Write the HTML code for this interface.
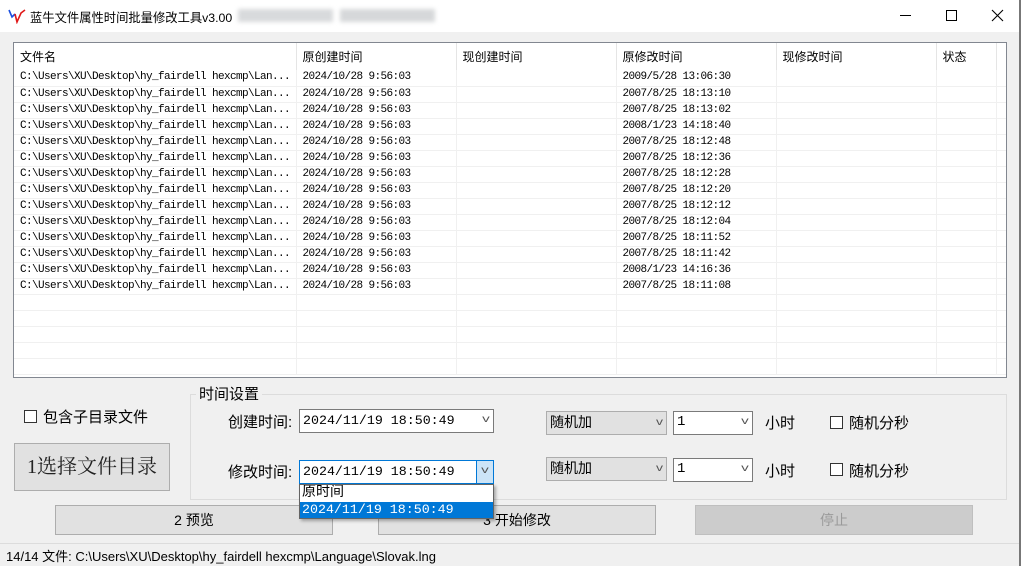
<!DOCTYPE html><html><head><meta charset="utf-8"><style>
*{margin:0;padding:0;box-sizing:border-box}
body{width:1021px;height:566px;background:#f0f0f0;position:relative;overflow:hidden;font-family:"Liberation Sans","Noto Sans CJK SC",sans-serif;color:#000}
.a{position:absolute}
#title{left:0;top:0;width:1021px;height:32px;background:#fff;border-right:1px solid #888}
#list{left:13px;top:42px;width:994px;height:336px;background:#fff;border:1px solid #828790;overflow:hidden}
table{border-collapse:collapse;table-layout:fixed;position:absolute;left:0;top:0;width:993px}
td{height:16px;border-bottom:1px solid #f0f0f0;border-right:1px solid #f0f0f0;font-family:"Liberation Mono",monospace;font-size:11px;letter-spacing:-0.6px;padding-left:6px;white-space:nowrap;overflow:hidden;line-height:15px}
th{height:27px;font-weight:normal;text-align:left;font-size:12px;padding-left:6px;border-right:1px solid #e5e5e5;font-family:"Liberation Sans","Noto Sans CJK SC",sans-serif;overflow:hidden;white-space:nowrap}
.cb{width:13px;height:13px;border:1px solid #333;background:#fff}
.combo{background:#fff;border:1px solid #7a7a7a;font-family:"Liberation Mono","Noto Sans CJK SC",monospace;font-size:13.3px;line-height:21px;padding-left:3px}
.gc{background:#e1e1e1;border:1px solid #adadad;font-size:14px;line-height:21px;padding-left:3px}
.arr{position:absolute;right:4px;top:0;font-size:10px;color:#555;transform:scaleX(1.4)}
.btn{background:#e1e1e1;border:1px solid #adadad;text-align:center;font-size:14px}
.t14{font-size:15px}
</style></head><body>
<div class="a" id="title">
<svg class="a" style="left:8px;top:8px" width="18" height="16"><path d="M1 2 L4 9 L7 6" stroke="#1a4fe0" stroke-width="1.6" fill="none"/><path d="M7 6 L9 14 L13 5 L17 2" stroke="#e01818" stroke-width="1.6" fill="none"/></svg>
<div class="a" style="left:30px;top:8px;font-size:12.3px;white-space:nowrap">蓝牛文件属性时间批量修改工具v3.00</div>
<div class="a" style="left:238px;top:9px;width:95px;height:13px;background:#d8dadc;filter:blur(2px)"></div>
<div class="a" style="left:340px;top:9px;width:95px;height:13px;background:#d6d8da;filter:blur(2px)"></div>
<div class="a" style="left:900px;top:15px;width:11px;height:1px;background:#000"></div>
<div class="a" style="left:946px;top:10px;width:11px;height:11px;border:1px solid #000"></div>
<svg class="a" style="left:991px;top:9px" width="13" height="13"><path d="M1 1L12 12M12 1L1 12" stroke="#000" stroke-width="1.1"/></svg>
</div>
<div class="a" id="list">
<table>
<colgroup><col style="width:282px"><col style="width:160px"><col style="width:160px"><col style="width:160px"><col style="width:160px"><col style="width:60px"><col style="width:11px"></colgroup>
<tr><th>文件名</th><th>原创建时间</th><th>现创建时间</th><th>原修改时间</th><th>现修改时间</th><th>状态</th><th></th></tr>
<tr><td>C:\Users\XU\Desktop\hy_fairdell hexcmp\Lan...</td><td>2024/10/28 9:56:03</td><td></td><td>2009/5/28 13:06:30</td><td></td><td></td><td></td></tr>
<tr><td>C:\Users\XU\Desktop\hy_fairdell hexcmp\Lan...</td><td>2024/10/28 9:56:03</td><td></td><td>2007/8/25 18:13:10</td><td></td><td></td><td></td></tr>
<tr><td>C:\Users\XU\Desktop\hy_fairdell hexcmp\Lan...</td><td>2024/10/28 9:56:03</td><td></td><td>2007/8/25 18:13:02</td><td></td><td></td><td></td></tr>
<tr><td>C:\Users\XU\Desktop\hy_fairdell hexcmp\Lan...</td><td>2024/10/28 9:56:03</td><td></td><td>2008/1/23 14:18:40</td><td></td><td></td><td></td></tr>
<tr><td>C:\Users\XU\Desktop\hy_fairdell hexcmp\Lan...</td><td>2024/10/28 9:56:03</td><td></td><td>2007/8/25 18:12:48</td><td></td><td></td><td></td></tr>
<tr><td>C:\Users\XU\Desktop\hy_fairdell hexcmp\Lan...</td><td>2024/10/28 9:56:03</td><td></td><td>2007/8/25 18:12:36</td><td></td><td></td><td></td></tr>
<tr><td>C:\Users\XU\Desktop\hy_fairdell hexcmp\Lan...</td><td>2024/10/28 9:56:03</td><td></td><td>2007/8/25 18:12:28</td><td></td><td></td><td></td></tr>
<tr><td>C:\Users\XU\Desktop\hy_fairdell hexcmp\Lan...</td><td>2024/10/28 9:56:03</td><td></td><td>2007/8/25 18:12:20</td><td></td><td></td><td></td></tr>
<tr><td>C:\Users\XU\Desktop\hy_fairdell hexcmp\Lan...</td><td>2024/10/28 9:56:03</td><td></td><td>2007/8/25 18:12:12</td><td></td><td></td><td></td></tr>
<tr><td>C:\Users\XU\Desktop\hy_fairdell hexcmp\Lan...</td><td>2024/10/28 9:56:03</td><td></td><td>2007/8/25 18:12:04</td><td></td><td></td><td></td></tr>
<tr><td>C:\Users\XU\Desktop\hy_fairdell hexcmp\Lan...</td><td>2024/10/28 9:56:03</td><td></td><td>2007/8/25 18:11:52</td><td></td><td></td><td></td></tr>
<tr><td>C:\Users\XU\Desktop\hy_fairdell hexcmp\Lan...</td><td>2024/10/28 9:56:03</td><td></td><td>2007/8/25 18:11:42</td><td></td><td></td><td></td></tr>
<tr><td>C:\Users\XU\Desktop\hy_fairdell hexcmp\Lan...</td><td>2024/10/28 9:56:03</td><td></td><td>2008/1/23 14:16:36</td><td></td><td></td><td></td></tr>
<tr><td>C:\Users\XU\Desktop\hy_fairdell hexcmp\Lan...</td><td>2024/10/28 9:56:03</td><td></td><td>2007/8/25 18:11:08</td><td></td><td></td><td></td></tr>
<tr><td></td><td></td><td></td><td></td><td></td><td></td><td></td></tr>
<tr><td></td><td></td><td></td><td></td><td></td><td></td><td></td></tr>
<tr><td></td><td></td><td></td><td></td><td></td><td></td><td></td></tr>
<tr><td></td><td></td><td></td><td></td><td></td><td></td><td></td></tr>
<tr><td></td><td></td><td></td><td></td><td></td><td></td><td></td></tr>
</table>
</div>
<div class="a" style="left:190px;top:394px;width:817px;height:106px;border:1px solid #dcdcdc"></div>
<div class="a t14" style="left:196px;top:383px;background:#f0f0f0;padding:0 3px">时间设置</div>
<div class="a cb" style="left:24px;top:410px"></div>
<div class="a t14" style="left:43px;top:406px">包含子目录文件</div>
<div class="a btn" style="left:14px;top:443px;width:156px;height:48px;font-family:'Liberation Serif','Noto Serif CJK SC',serif;font-size:20px;line-height:46px;color:#222">1选择文件目录</div>
<div class="a t14" style="left:228px;top:411px">创建时间:</div>
<div class="a combo" style="left:299px;top:409px;width:195px;height:24px">2024/11/19 18:50:49<span class="arr">v</span></div>
<div class="a t14" style="left:228px;top:461px">修改时间:</div>
<div class="a combo" style="left:299px;top:460px;width:195px;height:24px;border-color:#0078d7">2024/11/19 18:50:49<span style="position:absolute;right:0;top:0;width:17px;height:22px;background:#cce4f7;border-left:1px solid #0078d7"></span><span class="arr" style="right:5px">v</span></div>
<div class="a gc" style="left:546px;top:411px;width:121px;height:24px">随机加<span class="arr">v</span></div>
<div class="a combo" style="left:673px;top:411px;width:80px;height:24px;font-size:14px">1<span class="arr">v</span></div>
<div class="a t14" style="left:765px;top:412px">小时</div>
<div class="a cb" style="left:830px;top:416px"></div>
<div class="a t14" style="left:849px;top:412px">随机分秒</div>
<div class="a gc" style="left:546px;top:457px;width:121px;height:24px">随机加<span class="arr">v</span></div>
<div class="a combo" style="left:673px;top:458px;width:80px;height:24px;font-size:14px">1<span class="arr">v</span></div>
<div class="a t14" style="left:765px;top:460px">小时</div>
<div class="a cb" style="left:830px;top:463px"></div>
<div class="a t14" style="left:849px;top:460px">随机分秒</div>
<div class="a btn" style="left:55px;top:505px;width:278px;height:30px;line-height:28px">2 预览</div>
<div class="a btn" style="left:378px;top:505px;width:278px;height:30px;line-height:28px">3 开始修改</div>
<div class="a btn" style="left:695px;top:505px;width:278px;height:30px;line-height:28px;background:#cccccc;border-color:#bfbfbf;color:#9a9a9a">停止</div>
<div class="a" style="left:299px;top:484px;width:195px;height:35px;background:#fff;border:1px solid #646464;box-shadow:2px 2px 3px rgba(0,0,0,.3);font-family:'Liberation Mono','Noto Sans CJK SC',monospace;font-size:13.3px;z-index:5;overflow:hidden">
<div style="height:17px;line-height:17px;padding-left:2px;font-size:14px">原时间</div>
<div style="height:16px;line-height:16px;padding-left:2px;background:#0078d7;color:#fff">2024/11/19 18:50:49</div></div>
<div class="a" style="left:0;top:543px;width:1021px;height:1px;background:#dcdcdc"></div>
<div class="a" style="left:6px;top:546px;font-size:13px;white-space:nowrap">14/14 文件: C:\Users\XU\Desktop\hy_fairdell hexcmp\Language\Slovak.lng</div>
<div class="a" style="left:1019px;top:0;width:2px;height:566px;background:#777"></div>
</body></html>
